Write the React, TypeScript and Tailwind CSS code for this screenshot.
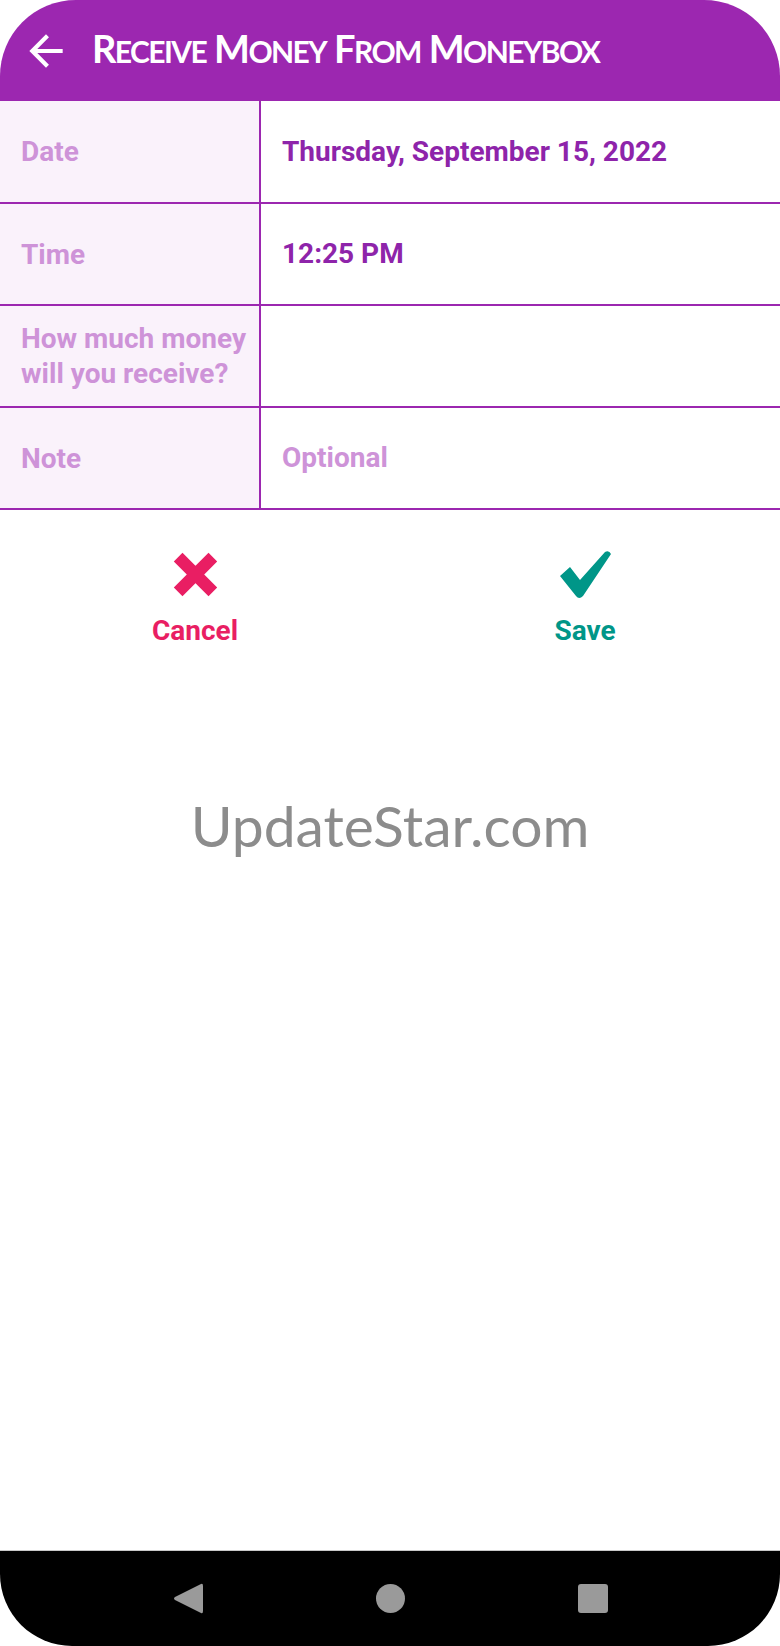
import React from 'react';

const rows = [
  { label: 'Date', value: 'Thursday, September 15, 2022', muted: false },
  { label: 'Time', value: '12:25 PM', muted: false },
  { label: 'How much money will you receive?', value: '', muted: false },
  { label: 'Note', value: 'Optional', muted: true },
];

function SmallCapsTitle({ text }: { text: string }) {
  const words = text.split(' ');
  return (
    <h1 className="flex items-baseline gap-[8px] text-white font-['Lato','Open_Sans',sans-serif] font-bold tracking-[-1.6px] leading-none">
      {words.map((word, i) => (
        <span key={i} className="flex items-baseline">
          <span className="text-[38px]">{word[0].toUpperCase()}</span>
          <span className="text-[30px]">{word.slice(1).toUpperCase()}</span>
        </span>
      ))}
    </h1>
  );
}

function BackArrow() {
  return (
    <svg viewBox="0 0 24 24" className="w-[50px] h-[50px] fill-white">
      <path d="M20 11H7.83l5.59-5.59L12 4l-8 8 8 8 1.41-1.41L7.83 13H20v-2z" />
    </svg>
  );
}

function CrossIcon() {
  return (
    <svg viewBox="0 0 48 48" className="w-[49px] h-[49px]">
      <path d="M7 7L41 41M41 7L7 41" stroke="#e91e63" strokeWidth="12" />
    </svg>
  );
}

function CheckIcon() {
  return (
    <svg viewBox="0 0 51 48" className="w-[51px] h-[48px] fill-[#009688]">
      <path d="M0 26 L10 17 L20 30 L45 2 Q49 0 51 4 L23 46 Q19 50 16 46 Z" />
    </svg>
  );
}

export default function App() {
  return (
    <div className="w-[780px] h-[1646px] flex flex-col bg-white font-['Roboto','Liberation_Sans',sans-serif]">
      <header className="h-[101px] shrink-0 flex items-center pl-[21px] gap-[21px] bg-[#9c27b0] rounded-t-[76px]">
        <BackArrow />
        <div className="pb-[6px]">
          <SmallCapsTitle text="Receive Money From Moneybox" />
        </div>
      </header>

      <div className="flex flex-col">
        {rows.map((row, i) => (
          <div
            key={row.label}
            className={`flex border-b-2 border-[#9c27b0] ${i === 0 ? 'h-[103px]' : 'h-[102px]'}`}
          >
            <div className="w-[261px] shrink-0 flex items-center pl-[21px] pr-[6px] bg-[#faf2fb] border-r-2 border-[#9c27b0]">
              <span className="text-[28px] leading-[35px] font-bold text-[#ce93d8]">{row.label}</span>
            </div>
            <div className="flex-1 flex items-center pl-[21px]">
              <span
                className={`text-[28px] font-bold ${row.muted ? 'text-[#ce93d8]' : 'text-[#8e24aa]'}`}
              >
                {row.value}
              </span>
            </div>
          </div>
        ))}
      </div>

      <div className="grid grid-cols-2 pt-[40px]">
        <button className="flex flex-col items-center">
          <CrossIcon />
          <span className="mt-[18px] text-[28px] leading-none font-bold text-[#e91e63]">Cancel</span>
        </button>
        <button className="flex flex-col items-center">
          <CheckIcon />
          <span className="mt-[19px] text-[28px] leading-none font-bold text-[#009688]">Save</span>
        </button>
      </div>

      <div className="flex-1 flex justify-center pt-[152px]">
        <span className="text-[57px] leading-none text-[#8c8c8c] font-['Lato','Open_Sans',sans-serif]">
          UpdateStar.com
        </span>
      </div>

      <nav className="h-[96px] shrink-0 flex items-center justify-center gap-[173px] bg-black border-t border-[#c8c8c8] rounded-b-[72px]">
        <svg viewBox="0 0 30 31" className="w-[30px] h-[31px] fill-[#9a9a9a]">
          <path d="M28 1 Q30 0 30 3 L30 28 Q30 31 28 30 L2 17 Q0 15.5 2 14 Z" />
        </svg>
        <div className="w-[29px] h-[29px] rounded-full bg-[#9a9a9a]" />
        <div className="w-[30px] h-[29px] rounded-[3px] bg-[#9a9a9a]" />
      </nav>
    </div>
  );
}
